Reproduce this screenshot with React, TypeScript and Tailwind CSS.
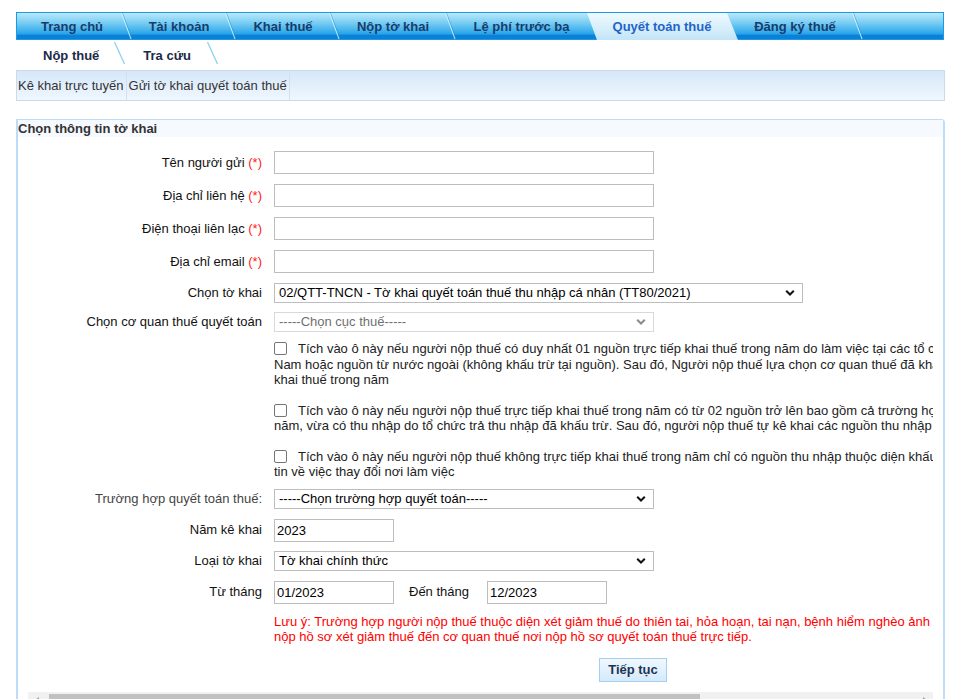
import React from "react";

const tabs = [
  { label: "Trang chủ", w: "w-[110px]", sep: true },
  { label: "Tài khoản", w: "w-[104px]", sep: true },
  { label: "Khai thuế", w: "w-[104px]", sep: true },
  { label: "Nộp tờ khai", w: "w-[116px]", sep: true },
  { label: "Lệ phí trước bạ", w: "w-[141px]", sep: false },
  { label: "Quyết toán thuế", w: "w-[140px]", sep: false, active: true },
  { label: "Đăng ký thuế", w: "w-[126px]", sep: true },
];

const Chevron = ({ color = "#111" }: { color?: string }) => (
  <svg className="absolute right-[7px] top-1/2 -translate-y-1/2" width="10" height="7" viewBox="0 0 10 7">
    <path d="M1.2 1.2 5 5 8.8 1.2" fill="none" stroke={color} strokeWidth="2" />
  </svg>
);

const TabSep = () => (
  <svg className="absolute top-0 -right-[5px] h-full w-[11px]" viewBox="0 0 11 26" preserveAspectRatio="none">
    <line x1="1.5" y1="0" x2="11" y2="26" stroke="#1589d0" strokeOpacity="0.45" strokeWidth="1" />
    <line x1="0.5" y1="0" x2="10" y2="26" stroke="#d6f3ff" strokeOpacity="0.9" strokeWidth="1" />
  </svg>
);

const SubSep = () => (
  <svg className="absolute top-[2px] -right-[5px] h-[22px] w-[11px]" viewBox="0 0 11 22">
    <line x1="0.5" y1="0" x2="10.5" y2="22" stroke="#8fd0f0" strokeWidth="1.3" />
  </svg>
);

const Req = () => <span className="text-[#ff1a1a]"> (*)</span>;

const Label = ({ children, muted }: { children: React.ReactNode; muted?: boolean }) => (
  <div className={`w-[234px] shrink-0 text-right ${muted ? "text-[#444]" : "text-[#111]"}`}>{children}</div>
);

const TextBox = ({ value = "", w = "w-[380px]" }: { value?: string; w?: string }) => (
  <input
    readOnly
    value={value}
    className={`${w} ml-[12px] h-[23px] border border-[#bdbdbd] bg-white px-[2px] text-[13px] text-black outline-none`}
  />
);

const SelectBox = ({
  value,
  w = "w-[380px]",
  disabled,
}: {
  value: string;
  w?: string;
  disabled?: boolean;
}) => (
  <div
    className={`relative ${w} ml-[12px] flex h-[20px] items-center border bg-white pl-[4px] ${
      disabled ? "border-[#d9d9d9] text-[#6f6f6f]" : "border-[#bdbdbd] text-black"
    }`}
  >
    <span className="whitespace-nowrap">{value}</span>
    <Chevron color={disabled ? "#8a8a8a" : "#111"} />
  </div>
);

const Check = () => (
  <span className="mr-[11px] inline-block h-[13px] w-[13px] rounded-[2px] border border-[#767676] bg-white align-[-2px]" />
);

export default function App() {
  return (
    <div className="h-[699px] overflow-hidden bg-white font-['Liberation_Sans',Arial,sans-serif] text-[13px] text-[#222]">
      <div className="ml-[16px] w-[929px]">
        {/* main tabs */}
        <div className="mt-[12px] flex h-[28px] w-[928px] border border-[#1b9be3] bg-[linear-gradient(to_bottom,#b9e8fb_0%,#86d3f4_30%,#45b4ed_65%,#25a2e8_82%,#0b80d8_84%,#0b80d8_100%)]">
          {tabs.map((t) => (
            <div
              key={t.label}
              className={`relative flex ${t.w} shrink-0 items-center justify-center pt-[2px] font-bold ${
                t.active ? "text-[#2264c8]" : "text-[#173b6c]"
              }`}
            >
              {t.active && (
                <div className="absolute -left-[5px] top-0 h-[27px] w-[151px] bg-[linear-gradient(to_bottom,#f0faff_0%,#d9f0fb_50%,#c3e5f7_100%)] [clip-path:polygon(0_0,140px_0,151px_100%,10px_100%)]" />
              )}
              <span className="relative">{t.label}</span>
              {t.sep && <TabSep />}
            </div>
          ))}
        </div>

        {/* sub tabs */}
        <div className="flex h-[30px] items-center font-bold text-[#1b2a48]">
          <div className="relative flex h-full items-center pl-[27px] pr-[21px] pt-[1px]">
            Nộp thuế
            <SubSep />
          </div>
          <div className="relative flex h-full items-center pl-[23px] pr-[22px] pt-[1px]">
            Tra cứu
            <SubSep />
          </div>
        </div>

        {/* third menu bar */}
        <div className="flex h-[31px] w-[929px] border border-[#c9dcee] bg-[linear-gradient(to_bottom,#d6e7f8,#eff7fe)] text-[#333]">
          <div className="flex items-center border-r border-[#cfe0f0] pl-[1px] pr-[2px]">Kê khai trực tuyến</div>
          <div className="flex items-center border-r border-[#cfe0f0] px-[2px]">Gửi tờ khai quyết toán thuế</div>
        </div>

        {/* panel */}
        <div className="mt-[18px] rounded-tr-[4px] border border-x-2 border-[#bcdcf7]">
          <div className="h-[17px] bg-[#f6faff] font-bold leading-[17px] text-[#333]">Chọn thông tin tờ khai</div>

          <div className="mx-[10px] pt-[9px]">
            <div className="overflow-hidden">
              <div className="w-[1210px]">
                <div className="flex h-[33px] items-center">
                  <Label>Tên người gửi<Req /></Label>
                  <TextBox />
                </div>
                <div className="flex h-[33px] items-center">
                  <Label>Địa chỉ liên hệ<Req /></Label>
                  <TextBox />
                </div>
                <div className="flex h-[33px] items-center">
                  <Label>Điện thoại liên lạc<Req /></Label>
                  <TextBox />
                </div>
                <div className="flex h-[33px] items-center">
                  <Label>Địa chỉ email<Req /></Label>
                  <TextBox />
                </div>
                <div className="flex h-[29px] items-center">
                  <Label>Chọn tờ khai</Label>
                  <SelectBox w="w-[529px]" value="02/QTT-TNCN - Tờ khai quyết toán thuế thu nhập cá nhân (TT80/2021)" />
                </div>
                <div className="flex h-[29px] items-center">
                  <Label>Chọn cơ quan thuế quyết toán</Label>
                  <SelectBox disabled value="-----Chọn cục thuế-----" />
                </div>

                <div className="pl-[246px] leading-[15.5px] whitespace-nowrap text-[#222]">
                  <p className="mt-[5px]">
                    <Check />
                    Tích vào ô này nếu người nộp thuế có duy nhất 01 nguồn trực tiếp khai thuế trong năm do làm việc tại các tổ chức kinh tế, cơ quan hành chính tại Việt
                    <br />
                    Nam hoặc nguồn từ nước ngoài (không khấu trừ tại nguồn). Sau đó, Người nộp thuế lựa chọn cơ quan thuế đã khai thuế hoặc cơ quan thuế đã trực tiếp
                    <br />
                    khai thuế trong năm
                  </p>
                  <p className="mt-[15px]">
                    <Check />
                    Tích vào ô này nếu người nộp thuế trực tiếp khai thuế trong năm có từ 02 nguồn trở lên bao gồm cả trường hợp vừa có thu nhập trực tiếp khai thuế trong
                    <br />
                    năm, vừa có thu nhập do tổ chức trả thu nhập đã khấu trừ. Sau đó, người nộp thuế tự kê khai các nguồn thu nhập
                  </p>
                  <p className="mt-[15px]">
                    <Check />
                    Tích vào ô này nếu người nộp thuế không trực tiếp khai thuế trong năm chỉ có nguồn thu nhập thuộc diện khấu trừ tại nguồn và đã có thông
                    <br />
                    tin về việc thay đổi nơi làm việc
                  </p>
                </div>

                <div className="mt-[4px] flex h-[31px] items-center">
                  <Label muted>Trường hợp quyết toán thuế:</Label>
                  <SelectBox value="-----Chọn trường hợp quyết toán-----" />
                </div>
                <div className="flex h-[31px] items-center">
                  <Label>Năm kê khai</Label>
                  <TextBox w="w-[120px]" value="2023" />
                </div>
                <div className="flex h-[31px] items-center">
                  <Label>Loại tờ khai</Label>
                  <SelectBox value="Tờ khai chính thức" />
                </div>
                <div className="flex h-[31px] items-center">
                  <Label>Từ tháng</Label>
                  <TextBox w="w-[120px]" value="01/2023" />
                  <div className="ml-[15px] w-[66px] shrink-0 text-[#111]">Đến tháng</div>
                  <TextBox w="w-[120px]" value="12/2023" />
                </div>

                <div className="mt-[6px] pl-[246px] leading-[15px] whitespace-nowrap text-[#ff0000]">
                  Lưu ý: Trường hợp người nộp thuế thuộc diện xét giảm thuế do thiên tai, hỏa hoạn, tai nạn, bệnh hiểm nghèo ảnh hưởng đến khả năng nộp thuế thì không
                  <br />
                  nộp hồ sơ xét giảm thuế đến cơ quan thuế nơi nộp hồ sơ quyết toán thuế trực tiếp.
                </div>

                <div className="mt-[14px] pl-[571px]">
                  <button className="h-[24px] w-[68px] border border-[#a3d0f2] bg-[linear-gradient(to_bottom,#f0f8fe,#d4eafb)] font-bold text-[#1c3552]">
                    Tiếp tục
                  </button>
                </div>
              </div>
            </div>

            {/* horizontal scrollbar */}
            <div className="mt-[10px] flex h-[17px] bg-[#f1f1f1]">
              <div className="flex w-[17px] items-center justify-center">
                <span className="h-0 w-0 border-y-[3px] border-r-[4px] border-y-transparent border-r-[#a3a3a3]" />
              </div>
              <div className="relative flex-1">
                <div className="absolute left-[4px] top-[2px] h-[13px] w-[651px] bg-[#c1c1c1]" />
              </div>
              <div className="flex w-[17px] items-center justify-center">
                <span className="h-0 w-0 border-y-[3px] border-l-[4px] border-y-transparent border-l-[#a3a3a3]" />
              </div>
            </div>
          </div>
        </div>
      </div>
    </div>
  );
}
